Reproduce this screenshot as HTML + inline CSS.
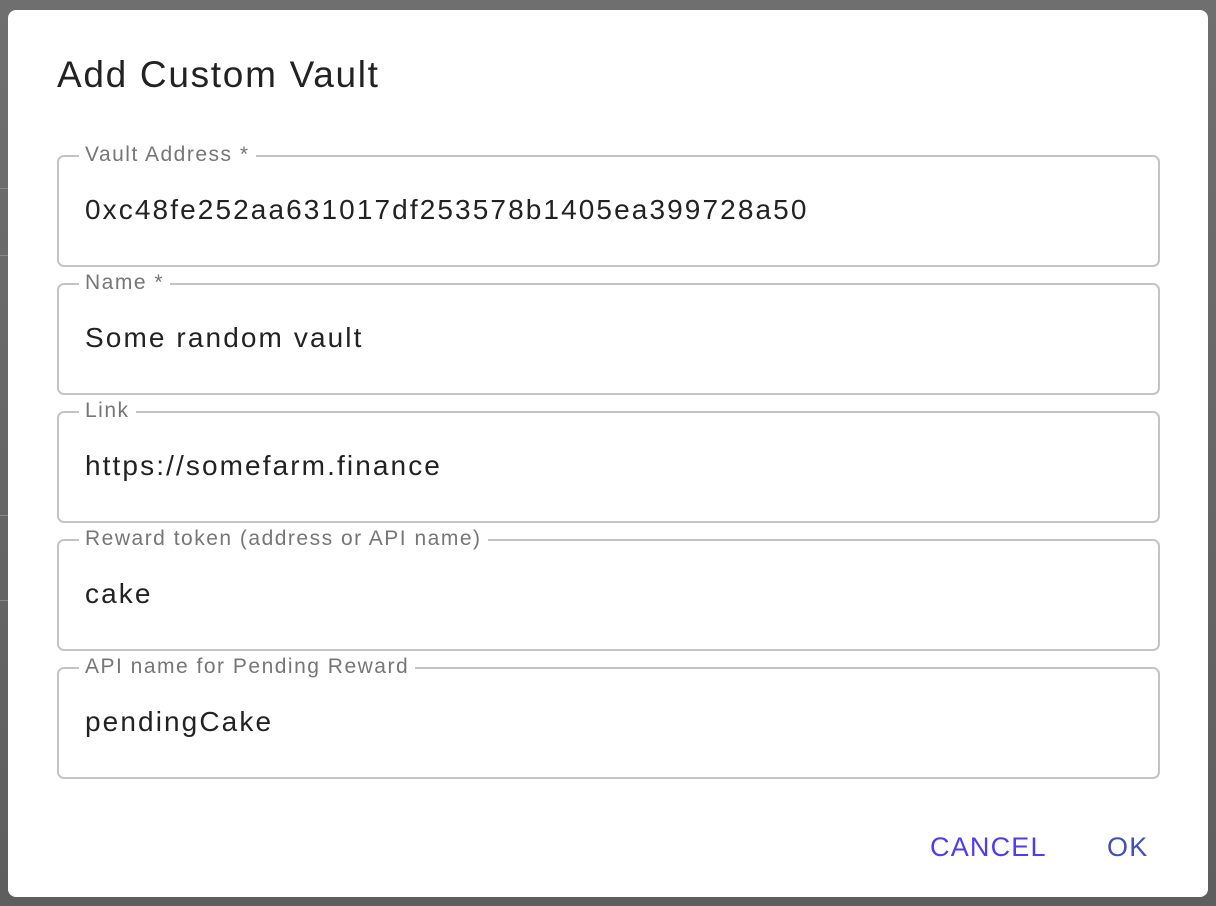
<!DOCTYPE html>
<html><head><style>
html,body{margin:0;padding:0;}
body{width:1216px;height:906px;background:linear-gradient(#6f6f6f,#5e5e5e);position:relative;overflow:hidden;font-family:"Liberation Sans",Arial,sans-serif;}
.dlg{position:absolute;left:8px;top:10px;width:1200px;height:887px;background:#fff;border-radius:8px;}
h1{position:absolute;left:49px;top:44px;margin:0;font-weight:400;font-size:37px;color:#222;letter-spacing:1.7px;}
.f{position:absolute;left:49px;width:1099px;height:108px;border:2px solid #c4c4c4;border-radius:7px;}
.f label{position:absolute;left:20px;top:-15px;background:#fff;padding:0 6px;font-size:21px;color:#767676;line-height:26px;letter-spacing:1.5px;}
.f div{position:absolute;left:26px;top:36px;font-size:28px;color:#222;line-height:34px;letter-spacing:2.1px;}
.b{position:absolute;top:820px;font-size:27px;line-height:34px;letter-spacing:1.2px;}
</style></head><body>
<div style="position:absolute;left:0;top:188px;width:8px;height:1px;background:#888"></div>
<div style="position:absolute;left:0;top:255px;width:8px;height:1px;background:#888"></div>
<div style="position:absolute;left:0;top:515px;width:8px;height:1px;background:#888"></div>
<div style="position:absolute;left:0;top:600px;width:8px;height:1px;background:#888"></div>
<div class="dlg">
<h1>Add Custom Vault</h1>
<div class="f" style="top:145px"><label>Vault Address *</label><div>0xc48fe252aa631017df253578b1405ea399728a50</div></div>
<div class="f" style="top:273px"><label>Name *</label><div>Some random vault</div></div>
<div class="f" style="top:401px"><label>Link</label><div>https://somefarm.finance</div></div>
<div class="f" style="top:529px"><label>Reward token (address or API name)</label><div>cake</div></div>
<div class="f" style="top:657px"><label>API name for Pending Reward</label><div>pendingCake</div></div>
<div class="b" style="left:922px;color:#4f3cf0">CANCEL</div>
<div class="b" style="left:1099px;color:#3f51b5">OK</div>
</div>
</body></html>
